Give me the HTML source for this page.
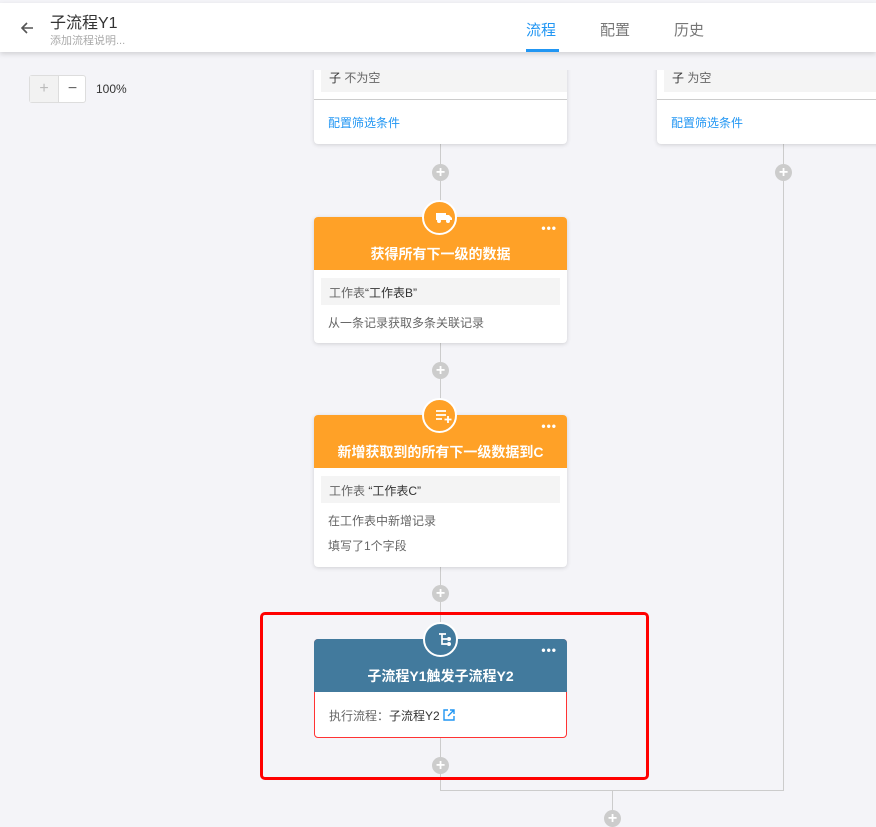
<!DOCTYPE html><html><head><meta charset="utf-8"><style>
*{box-sizing:border-box;margin:0;padding:0}
body{width:876px;height:823px;overflow:hidden;background:#f4f4f8;font-family:"Liberation Sans","Noto Sans CJK SC",sans-serif;position:relative}
.a{position:absolute}
.card{position:absolute;left:314px;width:253px;background:#fff;border-radius:4px;box-shadow:0 1px 4px rgba(0,0,0,.15);overflow:visible}
.hd{height:53px;border-radius:4px 4px 0 0;color:#fff;font-weight:bold;font-size:14px;text-align:center;padding-top:27px;position:relative}
.dots{position:absolute;right:10px;top:4px;font-size:12px;letter-spacing:1px}
.ic{position:absolute;left:108px;top:-17px;width:35px;height:35px;border-radius:50%;border:2px solid #fff}
.gr{margin:8px 7px 0;background:#f4f4f4;height:27px;font-size:12px;color:#666;padding:6px 8px}
.t{font-size:12px;color:#666;padding-left:14px}
.plus{position:absolute;width:17px;height:17px;border-radius:50%;background:#ccc;color:#fff;font-size:16px;line-height:17px;text-align:center;font-weight:bold}
.vl{position:absolute;width:1px;background:#ccc}
</style></head><body>
<div class="a" style="left:0;top:0;width:876px;height:3px;background:#333"></div>
<div class="a" style="left:0;top:3px;width:876px;height:49px;background:#fff;box-shadow:0 2px 5px rgba(0,0,0,.15);z-index:5">
<svg class="a" style="left:19px;top:17px" width="16" height="16" viewBox="0 0 16 16"><path d="M14 8H3M8 3L3 8l5 5" stroke="#555" stroke-width="1.6" fill="none"/></svg>
<div class="a" style="left:50px;top:6px;font-size:16px;color:#333">子流程Y1</div>
<div class="a" style="left:50px;top:29px;font-size:11px;color:#aaa">添加流程说明...</div>
<div class="a" style="left:526px;top:16px;font-size:15px;color:#2196f3">流程</div>
<div class="a" style="left:526px;top:46px;width:33px;height:3px;background:#2196f3"></div>
<div class="a" style="left:600px;top:16px;font-size:15px;color:#777">配置</div>
<div class="a" style="left:674px;top:16px;font-size:15px;color:#777">历史</div>
</div>
<div class="a" style="left:29px;top:75px;width:57px;height:28px;border:1px solid #ddd;border-radius:3px;background:#fff">
<div class="a" style="left:0;top:0;width:28px;height:26px;background:#f2f2f2;color:#bbb;text-align:center;line-height:26px;font-size:16px">+</div>
<div class="a" style="left:28px;top:0;width:1px;height:26px;background:#ddd"></div>
<div class="a" style="left:29px;top:0;width:27px;height:26px;color:#666;text-align:center;line-height:26px;font-size:16px">−</div></div>
<div class="a" style="left:96px;top:82px;font-size:12px;color:#333">100%</div>
<div class="vl" style="left:440px;top:144px;height:647px"></div>
<div class="vl" style="left:783px;top:144px;height:647px"></div>
<div class="a" style="left:440px;top:790px;width:344px;height:1px;background:#ccc"></div>
<div class="vl" style="left:612px;top:790px;height:33px"></div>
<div class="card" style="top:40px;height:104px;border-radius:0 0 4px 4px">
<div class="a" style="left:7px;top:24px;width:246px;height:28px;background:#f4f4f4;font-size:12px;color:#666;padding:5px 8px"><span style="color:#333">子</span> 不为空</div>
<div class="a" style="left:0;top:59px;width:253px;height:1px;background:#ccc"></div>
<div class="a" style="left:14px;top:74px;font-size:12px;color:#2196f3">配置筛选条件</div></div>
<div class="card" style="top:40px;left:657px;width:230px;height:104px;border-radius:0 0 0 4px">
<div class="a" style="left:7px;top:24px;width:223px;height:28px;background:#f4f4f4;font-size:12px;color:#666;padding:5px 8px"><span style="color:#333">子</span> 为空</div>
<div class="a" style="left:0;top:59px;width:230px;height:1px;background:#ccc"></div>
<div class="a" style="left:14px;top:74px;font-size:12px;color:#2196f3">配置筛选条件</div></div>
<div style="position:absolute;left:0;top:0;width:876px;height:70px;background:#f4f4f8;z-index:1"></div>
<div class="card" style="top:217px;height:126px">
<div class="hd" style="background:#ffa127">获得所有下一级的数据<span class="dots">•••</span>
<div class="ic" style="background:#ffa127"><svg style="margin:9px 0 0 8px" width="16" height="13" viewBox="0 0 16 13"><rect x="0" y="2" width="10" height="7" fill="#fff"/><path d="M10 4h3l3 3v2h-6z" fill="#fff"/><circle cx="3" cy="10" r="2" fill="#fff"/><circle cx="12" cy="10" r="2" fill="#fff"/></svg></div></div>
<div class="gr">工作表<span style="color:#333">“工作表B”</span></div>
<div class="t" style="margin-top:9px">从一条记录获取多条关联记录</div></div>
<div class="card" style="top:415px;height:152px">
<div class="hd" style="background:#ffa127">新增获取到的所有下一级数据到C<span class="dots">•••</span>
<div class="ic" style="background:#ffa127"><svg style="margin:8px 0 0 8px" width="18" height="16" viewBox="0 0 18 16"><path d="M1 3h10M1 7h10M1 11h6M13 8v7M9.5 11.5h7" stroke="#fff" stroke-width="1.8" fill="none"/></svg></div></div>
<div class="gr">工作表 <span style="color:#333">“工作表C”</span></div>
<div class="t" style="margin-top:9px">在工作表中新增记录</div>
<div class="t" style="margin-top:8px">填写了1个字段</div></div>
<div class="card" style="top:639px;height:99px;border:1px solid #f33;box-shadow:none">
<div class="hd" style="background:#427a9d;margin:-1px -1px 0;">子流程Y1触发子流程Y2<span class="dots">•••</span>
<div class="ic" style="background:#427a9d;left:109px"><svg style="margin:8px 0 0 9px" width="14" height="16" viewBox="0 0 14 16"><path d="M1 2h7M4 2v10h5M4 7h5" stroke="#fff" stroke-width="1.7" fill="none"/><circle cx="11" cy="7" r="2" fill="#fff"/><circle cx="11" cy="12" r="2" fill="#fff"/></svg></div></div>
<div class="t" style="margin-top:15px">执行流程：<span style="color:#333">子流程Y2</span> <svg width="12" height="12" viewBox="0 0 12 12" style="vertical-align:-1px"><path d="M5 1H1v10h10V7M7 1h4v4M11 1L5 7" stroke="#2196f3" stroke-width="1.4" fill="none"/></svg></div></div>
<div class="a" style="left:260px;top:612px;width:389px;height:168px;border:3px solid #f00;border-radius:5px"></div>
<div class="plus" style="left:432px;top:164px">+</div>
<div class="plus" style="left:775px;top:164px">+</div>
<div class="plus" style="left:432px;top:362px">+</div>
<div class="plus" style="left:432px;top:585px">+</div>
<div class="plus" style="left:432px;top:757px">+</div>
<div class="plus" style="left:604px;top:810px">+</div>
</body></html>
